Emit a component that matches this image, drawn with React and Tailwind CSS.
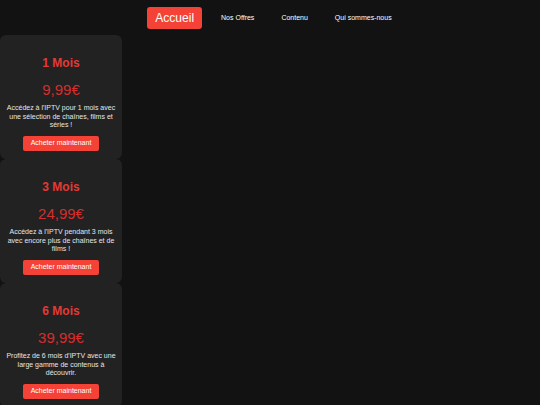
import React from "react";

const plans = [
  { title: "1 Mois", price: "9,99€", desc: "Accédez à l'IPTV pour 1 mois avec une sélection de chaînes, films et séries !" },
  { title: "3 Mois", price: "24,99€", desc: "Accédez à l'IPTV pendant 3 mois avec encore plus de chaînes et de films !" },
  { title: "6 Mois", price: "39,99€", desc: "Profitez de 6 mois d'IPTV avec une large gamme de contenus à découvrir." },
];

export default function App() {
  return (
    <div className="w-[540px] h-[405px] overflow-hidden bg-[#121212] text-white" style={{ fontFamily: '"Liberation Sans", Arial, sans-serif' }}>
      <nav className="h-[35px] flex items-center justify-center gap-[11px] pt-[1px] pl-[7px]">
        <a className="h-[22px] px-[8px] flex items-center rounded-[3px] bg-[#f44336] text-[12px] text-white">Accueil</a>
        <a className="px-[8px] text-[7px] text-white">Nos Offres</a>
        <a className="px-[8px] text-[7px] text-white">Contenu</a>
        <a className="px-[8px] text-[7px] text-white">Qui sommes-nous</a>
      </nav>
      <div className="flex flex-col w-[122px]">
        {plans.map((p) => (
          <div key={p.title} className="h-[124px] shrink-0 bg-[#222222] rounded-[6px] flex flex-col items-center px-[6px] pt-[21px] text-center">
            <h3 className="text-[12px] leading-[14px] font-bold text-[#e53935]">{p.title}</h3>
            <p className="mt-[11px] text-[15px] leading-[18px] text-[#d32f2f]">{p.price}</p>
            <p className="mt-[5px] text-[7px] leading-[8.5px] text-[#e6e6e6]">{p.desc}</p>
            <button className="mt-[6px] h-[15px] w-[76px] rounded-[2px] bg-[#f44336] text-[7px] text-white flex items-center justify-center">Acheter maintenant</button>
          </div>
        ))}
      </div>
    </div>
  );
}
